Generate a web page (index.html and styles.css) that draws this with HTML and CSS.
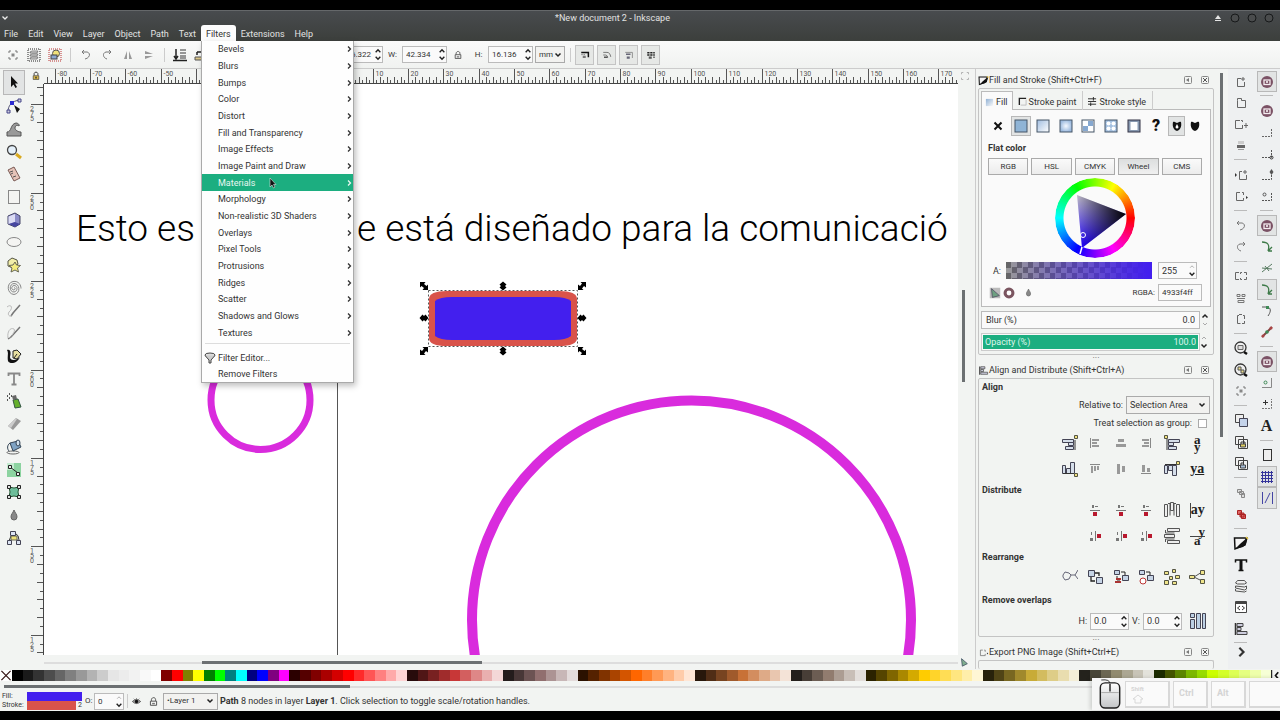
FILE: index.html
```html
<!DOCTYPE html>
<html lang="en">
<head>
    <meta charset="UTF-8">
    <meta name="viewport" content="width=device-width, initial-scale=1.0">
    <title>*New document 2 - Inkscape</title>
    <link rel="stylesheet" href="styles.css">
</head>
<body>
    <!-- Shared icons -->
    <svg class="sprite" aria-hidden="true">
        <symbol id="i-chev" viewBox="0 0 6 6"><path d="M2 .5l2.500 2.500L2 5.500" fill="none" stroke="currentColor" stroke-width="1.3"/></symbol>
        <symbol id="i-updown" viewBox="0 0 8 16"><path d="M1.500 5.500L4 3l2.500 2.500M1.500 10.500L4 13l2.500-2.500" fill="none" stroke="#222" stroke-width="1.5"/></symbol>
        <symbol id="i-up" viewBox="0 0 8 16"><path d="M1.500 5.500L4 3l2.500 2.500" fill="none" stroke="#222" stroke-width="1.5"/><path d="M2 11l2 2 2-2" fill="none" stroke="#aaa"/></symbol>
        <symbol id="i-down" viewBox="0 0 8 16"><path d="M2 5l2-2 2 2" fill="none" stroke="#aaa"/><path d="M1.500 10.500L4 13l2.500-2.500" fill="none" stroke="#222" stroke-width="1.5"/></symbol>
        <symbol id="i-frame" viewBox="0 0 16 16"><path d="M4 6V4h2M10 4h2v2M12 10v2h-2M6 12H4v-2" fill="none" stroke="#777"/><rect x="6.500" y="6.500" width="3" height="3" fill="#888"/></symbol>
        <symbol id="i-undo" viewBox="0 0 16 16"><path d="M4 5h5c4 1 3 6-2 7M4 5l2-2M4 5l2 2" fill="none" stroke="#777"/></symbol>
        <symbol id="i-redo" viewBox="0 0 16 16"><path d="M12 5H7c-4 1-3 6 1 7M12 5l-2-2M12 5l-2 2" fill="none" stroke="#777"/></symbol>
        <symbol id="i-lock" viewBox="0 0 16 16"><path d="M3.500 7.500h9v6h-9zM5 7V5c1-4 6-3 6 0v2" fill="none" stroke="#444" stroke-width="1.300"/><path d="M6 10h4v2H6z" fill="#777"/></symbol>
        <symbol id="i-min" viewBox="0 0 10 10"><rect x="1.500" y="1.500" width="7" height="7" rx="1" fill="none" stroke="#888"/><path d="M6 3v4L3 5z" fill="#777"/></symbol>
        <symbol id="i-close" viewBox="0 0 10 10"><rect x="1.500" y="1.500" width="7" height="7" rx="1" fill="none" stroke="#888"/><path d="M3 3l4 4M7 3L3 7" stroke="#555"/></symbol>
        <symbol id="i-brush" viewBox="0 0 16 16"><path d="M1.500 3h12L12 10 2 14z" fill="#f4f4f4" stroke="#111" stroke-width="1.500"/><path d="M15 2L7 9l-5 5 8-2 3-3z" fill="#111"/><path d="M13 2l2 2" stroke="#e8c840" stroke-width="1.500"/></symbol>
        <symbol id="i-alignl" viewBox="0 0 16 16"><path d="M2.500 2v12" stroke="#333" stroke-width="1.500"/><path d="M4 2.500h6v3H4zM4 6.500h4v3H4zM4 10.500h10v3H4z" fill="#ccd" stroke="#444"/></symbol>
        <symbol id="i-export" viewBox="0 0 16 16"><path d="M7 4.500H3.500v8h7V10M10.500 7V4.500H9" fill="none" stroke="#666"/><path d="M13 8l2 1.500-2 1.500z" fill="#333"/></symbol>
        <symbol id="i-doc" viewBox="0 0 16 16"><path d="M8 4.500H4.500v8h7V8M10 3v4M8 5h4" fill="none" stroke="#666"/></symbol>
        <symbol id="i-snap" viewBox="0 0 16 16"><circle cx="8" cy="8" r="6" fill="#7b5265"/><rect x="5" y="6" width="6" height="4.500" fill="none" stroke="#f4ecef" stroke-width="1.300"/><circle cx="8" cy="8" r="1" fill="#fff"/></symbol>
        <symbol id="i-snapc" viewBox="0 0 16 16"><path d="M3 12.500h9.500V4" fill="none" stroke="#666" stroke-dasharray="2 1"/></symbol>
        <symbol id="i-curve" viewBox="0 0 16 16"><path d="M3 3c6 0 8 3 6 9M9 12h4M9 12l4-4" fill="none" stroke="#3d7a48" stroke-width="1.300"/></symbol>
        <symbol id="i-drop" viewBox="0 0 16 16"><path d="M8 3c1 3 3 4 3 7a3 3 0 0 1-6 0c0-3 2-4 3-7z" fill="#888" stroke="#666"/></symbol>
        <symbol id="i-dup" viewBox="0 0 16 16"><path d="M2.500 2.500h8v8h-8z" fill="#eee" stroke="#444"/><path d="M6.500 6.500h8v8h-8z" fill="#c4d3ea" stroke="#445"/></symbol>
        <symbol id="i-zoom" viewBox="0 0 16 16"><circle cx="7.500" cy="7.500" r="5.500" fill="#eee" stroke="#333" stroke-width="1.300"/><path d="M5 5.500h5v4H5z" fill="#ddd" stroke="#666"/><path d="M11 12l3 2" stroke="#111" stroke-width="2.500"/></symbol>
        <symbol id="i-swap" viewBox="0 0 16 16"><path d="M1.500 1.500h6v6h-6zM9.500 8.500h6v6h-6z" fill="#c6d4e6" stroke="#445"/><path d="M8 4h4v3M4 8v4h4" fill="none" stroke="#222" stroke-width="1.300"/></symbol>
        <symbol id="i-disth" viewBox="0 0 16 16"><path d="M3 8.500h10M8 4.500h3" stroke="#777"/><path d="M5 3h2v3H5z" fill="#777"/><path d="M6 10h4v4H6z" fill="#b8182e"/></symbol>
        <symbol id="i-distv" viewBox="0 0 16 16"><path d="M8.500 3v10M4.500 4v3" stroke="#777"/><path d="M3 10h3v3H3z" fill="#777"/><path d="M10 6h4v4h-4z" fill="#b8182e"/></symbol>
        <symbol id="h-diag" viewBox="-5 -5 10 10"><path d="M-4-4H1.500L0-2 2.500 0 4-1.500V4H-1.500L0 2-2.500 0-4 1.500z"/></symbol>
        <symbol id="h-side" viewBox="-5 -5 10 10"><path d="M-4.500 0L-1.500-3.500 0-2l1.500-1.500L4.500 0 1.500 3.500 0 2l-1.500 1.500z"/></symbol>
    </svg>

    <!-- Title and menu bar -->
    <header class="header">
        <div class="titlebar">
            <svg class="win-menu" viewBox="0 0 6 6"><path d="M.5 1.500L3 4l2.500-2.500" fill="none" stroke="#eee" stroke-width="1.300"/></svg>
            <h1>*New document 2 - Inkscape</h1>
            <div class="win-buttons">
                <svg viewBox="0 0 10 10"><path d="M5 2l3 4H2zM2 7h6v1H2z" fill="#e4e4e4"/></svg>
                <svg viewBox="0 0 10 10"><circle cx="5" cy="5" r="4" fill="#4a4c4d" stroke="#17191a"/></svg>
                <svg viewBox="0 0 10 10"><circle cx="5" cy="5" r="4" fill="#4a4c4d" stroke="#17191a"/></svg>
                <svg viewBox="0 0 10 10"><circle cx="5" cy="5" r="4" fill="#4a4c4d" stroke="#17191a"/></svg>
            </div>
        </div>
        <nav class="menubar">
            <button>File</button>
            <button>Edit</button>
            <button>View</button>
            <button>Layer</button>
            <button>Object</button>
            <button>Path</button>
            <button>Text</button>
            <div class="menu-holder">
                <button class="open">Filters</button>
                <div class="menu">
                    <ul class="menu-list">
                        <li><button>Bevels<svg><use href="#i-chev"/></svg></button></li>
                        <li><button>Blurs<svg><use href="#i-chev"/></svg></button></li>
                        <li><button>Bumps<svg><use href="#i-chev"/></svg></button></li>
                        <li><button>Color<svg><use href="#i-chev"/></svg></button></li>
                        <li><button>Distort<svg><use href="#i-chev"/></svg></button></li>
                        <li><button>Fill and Transparency<svg><use href="#i-chev"/></svg></button></li>
                        <li><button>Image Effects<svg><use href="#i-chev"/></svg></button></li>
                        <li><button>Image Paint and Draw<svg><use href="#i-chev"/></svg></button></li>
                        <li><button class="current">Materials<svg><use href="#i-chev"/></svg></button></li>
                        <li><button>Morphology<svg><use href="#i-chev"/></svg></button></li>
                        <li><button>Non-realistic 3D Shaders<svg><use href="#i-chev"/></svg></button></li>
                        <li><button>Overlays<svg><use href="#i-chev"/></svg></button></li>
                        <li><button>Pixel Tools<svg><use href="#i-chev"/></svg></button></li>
                        <li><button>Protrusions<svg><use href="#i-chev"/></svg></button></li>
                        <li><button>Ridges<svg><use href="#i-chev"/></svg></button></li>
                        <li><button>Scatter<svg><use href="#i-chev"/></svg></button></li>
                        <li><button>Shadows and Glows<svg><use href="#i-chev"/></svg></button></li>
                        <li><button>Textures<svg><use href="#i-chev"/></svg></button></li>
                    </ul>
                    <ul class="menu-tail">
                        <li><button><svg class="funnel" viewBox="0 0 12 12"><ellipse cx="6" cy="3" rx="5" ry="2" fill="#ddd" stroke="#444"/><path d="M1 3.500L5 8v3h2V8l4-4.500" fill="#ccc" stroke="#444"/></svg>Filter Editor...</button></li>
                        <li><button>Remove Filters</button></li>
                    </ul>
                    <svg class="pointer" viewBox="0 0 8 12"><path d="M1 1v9l2-2 1.500 3 1.500-1-1.500-2.500H7z" fill="#111" stroke="#ddd" stroke-width=".6"/></svg>
                </div>
            </div>
            <button>Extensions</button>
            <button>Help</button>
        </nav>
    </header>

    <!-- Tool controls -->
    <div class="controls">
        <div class="control-icons">
            <button aria-label="Select all"><svg><use href="#i-frame"/></svg></button>
            <button aria-label="Select in all layers"><svg viewBox="0 0 16 16"><rect x="2" y="2" width="12" height="12" fill="none" stroke="#222" stroke-dasharray="1 1"/><path d="M4 5l2-1h6l-1 2H4zM4 8l2-1h6l-1 2H4zM4 11l2-1h6l-1 2H4z" fill="#ddd" stroke="#555" stroke-width=".7"/></svg></button>
            <button aria-label="Deselect"><svg viewBox="0 0 16 16"><rect x="2" y="2" width="12" height="12" fill="none" stroke="#b33" stroke-dasharray="1 1"/><circle cx="9" cy="6.500" r="3.500" fill="#efe27a" stroke="#555"/><rect x="4" y="8" width="6" height="4" fill="#8aa8d0" stroke="#444"/></svg></button>
            <span class="vsep"></span>
            <button aria-label="Rotate left"><svg><use href="#i-undo"/></svg></button>
            <button aria-label="Rotate right"><svg><use href="#i-redo"/></svg></button>
            <button aria-label="Flip horizontal"><svg viewBox="0 0 16 16"><path d="M7 4v8H4zM9 4v8h3z" fill="#999"/></svg></button>
            <button aria-label="Flip vertical"><svg viewBox="0 0 16 16"><path d="M4 4v3h8zM4 12V9h8z" fill="#999"/></svg></button>
            <span class="vsep"></span>
            <button aria-label="Lower to bottom"><svg viewBox="0 0 16 16"><path d="M4 2v9M2 9l2 3 2-3M1 13.500h14" fill="none" stroke="#222" stroke-width="1.500"/><path d="M8 3h6M8 6h6M8 9h6M8 11h6" stroke="#777" stroke-width="1.500"/></svg></button>
            <button aria-label="Lower"><svg viewBox="0 0 16 16"><path d="M4 5h8M4 5v3" stroke="#222" fill="none" stroke-width="1.500"/><path d="M2 10h12v3H2z" fill="#dcc88a" stroke="#555"/></svg></button>
        </div>
        <div class="control-fields">
            <div class="spin"><input id="pos-y" aria-label="Y" value="116.322"><svg><use href="#i-updown"/></svg></div>
            <label for="size-w">W:</label>
            <div class="spin"><input id="size-w" value="42.334"><svg><use href="#i-updown"/></svg></div>
            <button class="lock" aria-label="Lock ratio"><svg><use href="#i-lock"/></svg></button>
            <label for="size-h">H:</label>
            <div class="spin"><input id="size-h" value="16.136"><svg><use href="#i-updown"/></svg></div>
            <select class="unit" aria-label="Unit"><option>mm</option></select>
            <span class="vsep"></span>
            <div class="toggles">
                <button aria-label="Scale stroke"><svg viewBox="0 0 16 16"><path d="M3 4.500h9.500V11" fill="none" stroke="#111" stroke-width="2"/><path d="M3 7.500h6" stroke="#666" stroke-dasharray="2 1"/><path d="M5 9h4v3H5z" fill="#777"/></svg></button>
                <button aria-label="Scale corners"><svg viewBox="0 0 16 16"><path d="M3 4.500h5q4 0 5 6M3 8h3q2 0 3 3" fill="none" stroke="#555"/><path d="M4 10h5v2H4z" fill="#555"/></svg></button>
                <button aria-label="Move gradients"><svg viewBox="0 0 16 16"><path d="M3 4.500h9.500V12" fill="none" stroke="#777"/><path d="M4 6h6v2H4zM5 10h4v3H5z" fill="#667"/></svg></button>
                <button aria-label="Move patterns"><svg viewBox="0 0 16 16"><path d="M3 5h10M3 8h10" stroke="#222" stroke-width="2" stroke-dasharray="3 1"/><path d="M5 10h4v3H5zM11 10h2v2h-2z" fill="#555"/></svg></button>
            </div>
        </div>
    </div>

    <main class="main">
        <!-- Toolbox -->
        <div class="toolbox">
            <div class="tools">
                <button class="active" aria-label="Select"><svg viewBox="0 0 16 16"><path d="M5 2v11l2.500-2.500L9.500 14l1.500-1-2-3.500H12z" fill="#111"/></svg></button>
                <button aria-label="Nodes"><svg viewBox="0 0 16 16"><path d="M2 14C2 8 5 3 14 2" fill="none" stroke="#557"/><path d="M4 3h4v4H4z" fill="#2b2bd0"/><path d="M1 12h3v3H1zM12 1h3v3h-3z" fill="#ccd" stroke="#448"/><path d="M8 7l6 4-3 4z" fill="#111"/></svg></button>
                <button aria-label="Tweak"><svg viewBox="0 0 16 16"><path d="M1 15v-4c5 0 3-8 9-9 2 0 4 2 3 3-1-1-4-1-4 2 0 2 3 4 6 4v4z" fill="#999" stroke="#555"/></svg></button>
                <button aria-label="Zoom"><svg viewBox="0 0 16 16"><circle cx="6" cy="6" r="4.500" fill="#e4f0fa" stroke="#444" stroke-width="1.300"/><path d="M10 10l5 4" stroke="#d9aa20" stroke-width="3"/></svg></button>
                <button aria-label="Measure"><svg viewBox="0 0 16 16"><path d="M2 4l6-3 6 11-6 3z" fill="#e5c3b8" stroke="#7a5a55"/><path d="M4 6l3-1M5 8l2-1M7 11l3-1" stroke="#555"/></svg></button>
                <button aria-label="Rectangle"><svg viewBox="0 0 16 16"><rect x="2.500" y="1.500" width="11" height="13" fill="#f4f4f2" stroke="#888"/></svg></button>
                <button aria-label="3D box"><svg viewBox="0 0 16 16"><path d="M2 4l7-3 5 3v8l-5 3-7-3z" fill="#8c8cc8" stroke="#446"/><path d="M2.500 4.500L9 2v8l-6.500 2z" fill="#dcdcf4"/><path d="M9 10l5 2-5 3-6-3z" fill="#4646a0"/></svg></button>
                <button aria-label="Ellipse"><svg viewBox="0 0 16 16"><ellipse cx="8" cy="8" rx="7" ry="4.500" fill="#f4f4f2" stroke="#888"/></svg></button>
                <button aria-label="Star"><svg viewBox="0 0 16 16"><path d="M2 4l4-3 5 2 1 4-5 4-5-2z" fill="#f2eeaa" stroke="#554"/><path d="M9 5l1.500 3 4 .5-3 2.500 1 4-3.500-2-4 2 1-4-3-2.500 4-.5z" fill="#f4ec80" stroke="#665"/></svg></button>
                <button aria-label="Spiral"><svg viewBox="0 0 16 16"><path d="M8 8c1-1 2 1 0 2-3 0-3-4 0-4.500 4 0 4 6 0 6.500C3 12 3 4 8 3.500c6 0 7 10 0 11C1 14 0 3 7 1.500c6-1 8 4 8 7" fill="none" stroke="#888"/></svg></button>
                <button aria-label="Pencil"><svg viewBox="0 0 16 16"><path d="M14 2L7 10l-2 3" stroke="#777" stroke-width="1.500"/><path d="M1 4c5-4 6 2 2 5-2 3 1 5 3 4" fill="none" stroke="#bbb"/></svg></button>
                <button aria-label="Pen"><svg viewBox="0 0 16 16"><path d="M14 2L5 12l-3 2" stroke="#777" stroke-width="1.500"/><path d="M2 13C1 7 4 2 8 4c2 2-3 8-5 9" fill="none" stroke="#bbb"/></svg></button>
                <button aria-label="Calligraphy"><svg viewBox="0 0 16 16"><path d="M1 2c4-1 4 3 3 7 0 4 6 4 10 0-2 6-10 8-12 4C1 8 3 5 1 2z" fill="#111"/><path d="M7 3l4-1 4 4-4 5-4-1z" fill="#e7dfa0" stroke="#222"/><path d="M8 10l3-4" stroke="#222"/></svg></button>
                <button aria-label="Text"><svg viewBox="0 0 16 16"><path d="M2.500 5V2.500h11V5M8 2.500v11M5.500 13.500h5" fill="none" stroke="#888" stroke-width="1.800"/></svg></button>
                <button aria-label="Spray"><svg viewBox="0 0 16 16"><path d="M7 7l5-1 3 8-6 1z" fill="#65b02c" stroke="#354"/><path d="M6 3l4-1 1 4-4 1z" fill="#666"/><path d="M1 3h1M3 1h1M3 5h1M1 7h1M5 3h1" stroke="#222" stroke-width="1.500"/></svg></button>
                <button aria-label="Eraser"><svg viewBox="0 0 16 16"><path d="M2 10l8-8 5 3-8 9z" fill="#999"/><path d="M2 10l8-8 1 1-6 9z" fill="#ccc"/></svg></button>
                <button aria-label="Bucket"><svg viewBox="0 0 16 16"><ellipse cx="7" cy="13.500" rx="6" ry="1.500" fill="none" stroke="#666"/><path d="M4 4l8-2 3 6-8 4z" fill="#7fa3c4" stroke="#345"/><path d="M4 4C1 6 1 10 3 12" fill="none" stroke="#345"/><ellipse cx="12" cy="4" rx="2" ry="3" fill="#cfe0ee" stroke="#345"/></svg></button>
                <button aria-label="Gradient"><svg viewBox="0 0 16 16"><path d="M1 1h14v14H1z" fill="#8cd3a0"/><path d="M1 1h7v7H1z" fill="#c4ecd0"/><path d="M4 5l8 6" stroke="#222"/><path d="M2.500 3.500h3v3h-3zM10.500 10.500h3v3h-3z" fill="#eee" stroke="#222"/></svg></button>
                <button aria-label="Mesh"><svg viewBox="0 0 16 16"><path d="M3 3q5 2 10 0-2 5 0 10-5-2-10 0 2-5 0-10z" fill="#6dbd9a" stroke="#253"/><path d="M1.500 1.500h3v3h-3zM11.500 1.500h3v3h-3zM1.500 11.500h3v3h-3zM11.500 11.500h3v3h-3z" fill="#ddd" stroke="#222"/></svg></button>
                <button aria-label="Dropper"><svg><use href="#i-drop"/></svg></button>
                <button aria-label="Connector"><svg viewBox="0 0 16 16"><path d="M5 6l-2 5M8 6l4 5M9 3q4 2 4 7" fill="none" stroke="#333"/><path d="M5 6h6v4H5z" fill="#efe27a" stroke="#665"/><path d="M4.500 1.500h5v4h-5zM1.500 10.500h4v4h-4zM10.500 10.500h4v4h-4z" fill="#dde4f4" stroke="#445"/></svg></button>
            </div>
        </div>

        <!-- Rulers and drawing -->
        <section class="editor">
            <svg class="guide-lock" viewBox="0 0 16 16"><path d="M5 7V4c1-3 5-3 6 0v3" fill="none" stroke="#333" stroke-width="1.500"/><path d="M3.500 7.500h9v6h-9z" fill="#d9b84a" stroke="#333"/><path d="M7 9h2v3H7z" fill="#222"/></svg>
            <svg class="ruler-h" id="rulerH"></svg>
            <svg class="corner" viewBox="0 0 16 16"><path d="M4 6V4h2M10 4h2v2M12 10v2h-2M6 12H4v-2" fill="none" stroke="#aaa"/></svg>
            <svg class="ruler-v" id="rulerV"></svg>
            <svg class="canvas">
                <path d="M293.500 0V800" stroke="#555"/>
                <text class="headline" x="32" y="157">Esto es</text>
                <text class="headline" x="313" y="157">e está diseñado para la comunicació</text>
                <circle cx="216.500" cy="316" r="49.500" fill="none" stroke="#d92bdd" stroke-width="7"/>
                <circle cx="647.500" cy="536" r="219.500" fill="none" stroke="#d92bdd" stroke-width="10"/>
                <path d="M385 215Q385 207 403 207H515Q533 207 533 215V254Q533 262 515 262H403Q385 262 385 254z" fill="#d9534a"/>
                <path d="M391 217Q396 213 408 213H510Q522 213 527 217V252Q522 256 510 256H408Q396 256 391 252z" fill="#431fee"/>
                <rect x="384.500" y="206.500" width="149" height="56" fill="none" stroke="#555" stroke-dasharray="2 2"/>
                <use href="#h-diag" x="375" y="197" width="10" height="10"/>
                <use href="#h-diag" x="533" y="262" width="10" height="10"/>
                <g transform="translate(538 202) rotate(90)"><use href="#h-diag" x="-5" y="-5" width="10" height="10"/></g>
                <g transform="translate(380 267) rotate(90)"><use href="#h-diag" x="-5" y="-5" width="10" height="10"/></g>
                <use href="#h-side" x="375" y="229" width="10" height="10"/>
                <use href="#h-side" x="533" y="229" width="10" height="10"/>
                <g transform="translate(459 202) rotate(90)"><use href="#h-side" x="-5" y="-5" width="10" height="10"/></g>
                <g transform="translate(459 267) rotate(90)"><use href="#h-side" x="-5" y="-5" width="10" height="10"/></g>
            </svg>
            <div class="scroll-v"><span></span></div>
            <span></span>
            <div class="scroll-h"><span></span></div>
            <svg class="cms" viewBox="0 0 12 12"><path d="M3 2l7 6-6 3z" fill="#7fae8e" stroke="#456"/></svg>
        </section>

        <!-- Docked dialogs -->
        <aside class="dock">
            <div class="dock-title">
                <svg><use href="#i-brush"/></svg>
                <h2>Fill and Stroke (Shift+Ctrl+F)</h2>
                <button aria-label="Iconify"><svg><use href="#i-min"/></svg></button>
                <button aria-label="Close"><svg><use href="#i-close"/></svg></button>
            </div>
            <div class="panel fill-panel">
                <div class="tabs">
                    <button class="selected"><svg viewBox="0 0 10 10"><defs><linearGradient id="tg" x2="1" y2="1"><stop stop-color="#8fb0d4"/><stop offset="1" stop-color="#fafafa"/></linearGradient></defs><path d="M1 1h8v8H1z" fill="url(#tg)"/></svg>Fill</button>
                    <button><svg viewBox="0 0 10 10"><path d="M1.500 9V1.500H9" fill="none" stroke="#222" stroke-width="1.500"/><path d="M9 3v6H3" fill="none" stroke="#bbb"/></svg>Stroke paint</button>
                    <button><svg viewBox="0 0 10 10"><path d="M0 2h9M0 5h9M0 8h9" stroke="#222"/><path d="M6 0v4M3 6v4" stroke="#222"/></svg>Stroke style</button>
                </div>
                <div class="tab-page">
                    <div class="paint-types">
                        <button aria-label="No paint"><svg viewBox="0 0 16 16"><path d="M4.500 4.500l7 7M11.500 4.500l-7 7" stroke="#111" stroke-width="2"/></svg></button>
                        <button class="pressed" aria-label="Flat color"><svg viewBox="0 0 16 16"><rect x="2" y="2" width="12" height="12" fill="#8fb4d6" stroke="#456"/></svg></button>
                        <button aria-label="Linear gradient"><svg viewBox="0 0 16 16"><defs><linearGradient id="lg" x2="1" y2="1"><stop stop-color="#a0bde0"/><stop offset="1" stop-color="#fff"/></linearGradient></defs><rect x="2" y="2" width="12" height="12" fill="url(#lg)" stroke="#456"/></svg></button>
                        <button aria-label="Radial gradient"><svg viewBox="0 0 16 16"><defs><radialGradient id="rg"><stop stop-color="#f4f8ff"/><stop offset="1" stop-color="#9dbbe0"/></radialGradient></defs><rect x="2" y="2" width="12" height="12" fill="url(#rg)" stroke="#456"/></svg></button>
                        <button aria-label="Mesh gradient"><svg viewBox="0 0 16 16"><rect x="2" y="2" width="12" height="12" fill="#fff" stroke="#456"/><path d="M3 8h5v5H3zM8 3h5v5H8z" fill="#86a8d0"/></svg></button>
                        <button aria-label="Pattern"><svg viewBox="0 0 16 16"><rect x="2" y="2" width="12" height="12" fill="#a4c0e0" stroke="#456"/><circle cx="5.500" cy="5.500" r="2" fill="#fff"/><circle cx="10.500" cy="5.500" r="2" fill="#fff"/><circle cx="5.500" cy="10.500" r="2" fill="#fff"/><circle cx="10.500" cy="10.500" r="2" fill="#fff"/></svg></button>
                        <button aria-label="Swatch"><svg viewBox="0 0 16 16"><rect x="2" y="2" width="12" height="12" fill="#8899b0" stroke="#334"/><rect x="4.500" y="4" width="7" height="8" fill="#fff"/></svg></button>
                        <button class="unknown" aria-label="Unset paint">?</button>
                        <button class="pressed narrow" aria-label="Even-odd"><svg viewBox="0 0 16 16"><path d="M4 4c2-1 3 1 4 1s2-2 4-1c1 5-1 8-4 9-3-1-5-4-4-9z" fill="#111"/><path d="M8 6l1.500 3a1.500 1.500 0 0 1-3 0z" fill="#fff"/></svg></button>
                        <button class="narrow" aria-label="Nonzero"><svg viewBox="0 0 16 16"><path d="M4 4c2-1 3 1 4 1s2-2 4-1c1 5-1 8-4 9-3-1-5-4-4-9z" fill="#111"/></svg></button>
                    </div>
                    <h3>Flat color</h3>
                    <div class="modes">
                        <button>RGB</button>
                        <button>HSL</button>
                        <button>CMYK</button>
                        <button class="pressed">Wheel</button>
                        <button>CMS</button>
                    </div>
                    <div class="wheel">
                        <svg viewBox="0 0 80 80">
                            <defs>
                                <linearGradient id="t1" x1="20" y1="18" x2="24" y2="66" gradientUnits="userSpaceOnUse"><stop stop-color="#d8d4e4"/><stop offset="1" stop-color="#2608ff"/></linearGradient>
                                <linearGradient id="t2" x1="20" y1="45" x2="71" y2="36" gradientUnits="userSpaceOnUse"><stop stop-color="#000" stop-opacity="0"/><stop offset="1" stop-color="#000"/></linearGradient>
                            </defs>
                            <path d="M22 17L71 36 27 70z" fill="url(#t1)"/>
                            <path d="M22 17L71 36 27 70z" fill="url(#t2)"/>
                            <path d="M27 69l-2 7" stroke="#fff" stroke-width="1.500"/>
                            <circle cx="28" cy="57" r="2.500" fill="none" stroke="#fff"/>
                        </svg>
                    </div>
                    <div class="alpha-row">
                        <label for="alpha">A:</label>
                        <input type="range" class="alpha" id="alpha" max="255" value="255">
                        <div class="spin"><input aria-label="Alpha value" value="255"><svg><use href="#i-down"/></svg></div>
                    </div>
                    <div class="rgba-row">
                        <svg viewBox="0 0 16 16"><path d="M2 2h12v12H2z" fill="#bbb"/><path d="M4 3l9 8-8 2z" fill="#6ca080" stroke="#556"/></svg>
                        <svg viewBox="0 0 16 16"><circle cx="8" cy="8" r="4.500" fill="#fff" stroke="#7b5560" stroke-width="3.500"/></svg>
                        <svg class="pick"><use href="#i-drop"/></svg>
                        <label for="rgba">RGBA:</label>
                        <input id="rgba" value="4933f4ff">
                    </div>
                </div>
                <div class="bar"><label for="blur">Blur (%)</label><input id="blur" value="0.0"><svg><use href="#i-up"/></svg></div>
                <div class="bar full"><label for="opacity">Opacity (%)</label><input id="opacity" value="100.0"><svg><use href="#i-down"/></svg></div>
            </div>
            <div class="grip">···</div>

            <div class="dock-title">
                <svg><use href="#i-alignl"/></svg>
                <h2>Align and Distribute (Shift+Ctrl+A)</h2>
                <button aria-label="Iconify"><svg><use href="#i-min"/></svg></button>
                <button aria-label="Close"><svg><use href="#i-close"/></svg></button>
            </div>
            <div class="panel align-panel">
                <h3>Align</h3>
                <div class="line"><label for="relative">Relative to:</label><select id="relative"><option>Selection Area</option></select></div>
                <div class="line"><label for="group">Treat selection as group:</label><input type="checkbox" id="group"></div>
                <div class="icon-grid">
                    <button aria-label="Right to left anchor"><svg viewBox="0 0 16 16"><path d="M.500 4.500h11v3H.5zM6.500 7.500h5v3h-5zM3.500 11.500h8v3h-8z" fill="#d5deea" stroke="#445"/><path d="M13 5v10" stroke="#333"/><path d="M12.500.500h3v3h-3z" fill="#f0e080" stroke="#554"/></svg></button>
                    <button aria-label="Align left"><svg viewBox="0 0 16 16"><path d="M3.500 3v10" stroke="#888"/><path d="M5 4h7v2H5zM5 7h5v2H5zM5 10h7v2H5z" fill="#999"/></svg></button>
                    <button aria-label="Center on vertical axis"><svg viewBox="0 0 16 16"><path d="M5 4h6v3H5zM3 9h10v3H3z" fill="#999"/></svg></button>
                    <button aria-label="Align right"><svg viewBox="0 0 16 16"><path d="M12.500 3v10" stroke="#888"/><path d="M4 4h7v2H4zM6 7h5v2H6zM4 10h7v2H4z" fill="#999"/></svg></button>
                    <button aria-label="Left to right anchor"><svg viewBox="0 0 16 16"><path d="M4.500 4.500h11v3h-11zM4.500 7.500h5v3h-5zM4.500 11.500h8v3h-8z" fill="#d5deea" stroke="#445"/><path d="M3 4v11" stroke="#333"/><path d="M.500.500h3v3h-3z" fill="#f0e080" stroke="#554"/></svg></button>
                    <button class="glyph stack" aria-label="Baseline horizontal"><span>a</span><span>y</span></button>
                    <button aria-label="Bottom to top anchor"><svg viewBox="0 0 16 16"><path d="M.500 4.500h3v8h-3zM4.500 7.500h4v5h-4zM8.500 1.500h4v11h-4z" fill="#d5deea" stroke="#445"/><path d="M1 12.500h11" stroke="#333"/><path d="M12.500 12.500h3v3h-3z" fill="#f0e080" stroke="#554"/></svg></button>
                    <button aria-label="Align top"><svg viewBox="0 0 16 16"><path d="M3 3.500h10" stroke="#888"/><path d="M4 5h2v7H4zM7 5h2v5H7zM10 5h2v4h-2z" fill="#999"/></svg></button>
                    <button aria-label="Center on horizontal axis"><svg viewBox="0 0 16 16"><path d="M4 3h3v10H4zM9 5h3v6H9z" fill="#999"/></svg></button>
                    <button aria-label="Align bottom"><svg viewBox="0 0 16 16"><path d="M3 12.500h10" stroke="#888"/><path d="M4 4h3v7H4zM9 7h3v4H9z" fill="#999"/></svg></button>
                    <button aria-label="Top to bottom anchor"><svg viewBox="0 0 16 16"><path d="M.500 4.500h3v8h-3zM4.500 4.500h4v5h-4zM8.500 4.500h4v10h-4z" fill="#d5deea" stroke="#445"/><path d="M1 3.500h12" stroke="#333"/><path d="M12.500.500h3v3h-3z" fill="#f0e080" stroke="#554"/></svg></button>
                    <button class="glyph under" aria-label="Baseline vertical">ya</button>
                </div>
                <h3>Distribute</h3>
                <div class="icon-grid dist">
                    <button aria-label="Distribute left edges"><svg><use href="#i-disth"/></svg></button>
                    <button aria-label="Distribute centers"><svg><use href="#i-disth"/></svg></button>
                    <button aria-label="Distribute right edges"><svg><use href="#i-disth"/></svg></button>
                    <button aria-label="Equal horizontal gaps"><svg viewBox="0 0 16 16"><path d="M.500 2.500h3v12h-3zM6.500.500h3v8h-3zM12.500 2.500h3v12h-3z" fill="#eee" stroke="#555"/><path d="M4 1.500h2v12M12 1.500h-2v12" fill="none" stroke="#555"/></svg></button>
                    <button class="glyph sides" aria-label="Distribute baselines">ay</button>
                    <button aria-label="Distribute top edges"><svg><use href="#i-distv"/></svg></button>
                    <button aria-label="Distribute middles"><svg><use href="#i-distv"/></svg></button>
                    <button aria-label="Distribute bottom edges"><svg><use href="#i-distv"/></svg></button>
                    <button aria-label="Equal vertical gaps"><svg viewBox="0 0 16 16"><path d="M3.500.500h12v3h-12zM.500 6.500h10v3H.5zM3.500 12.500h12v3h-12z" fill="#eee" stroke="#555"/><path d="M1.500 2v3h9M1.500 14v-3h9" fill="none" stroke="#555"/></svg></button>
                    <button class="glyph stack lined" aria-label="Distribute baselines vertically"><span>y</span><span>a</span></button>
                </div>
                <h3>Rearrange</h3>
                <div class="icon-grid">
                    <button aria-label="Graph layout"><svg viewBox="0 0 16 16"><path d="M1 6l2-3 4 1 2 2-2 4-4 1-2-3zM9 6h4M16 1l-3 5 3 4" fill="none" stroke="#667"/></svg></button>
                    <button aria-label="Exchange positions"><svg><use href="#i-swap"/></svg></button>
                    <button aria-label="Exchange in z-order"><svg viewBox="0 0 16 16"><path d="M1.500 1.500h5v4h-5zM9.500 6.500h6v5h-6z" fill="#c6d4e6" stroke="#445"/><path d="M8 3h4v3M4 7v4h3" stroke="#222" fill="none"/><path d="M3 9h5v2H3zM2 12h6v2H2z" fill="#a33"/></svg></button>
                    <button aria-label="Exchange clockwise"><svg viewBox="0 0 16 16"><path d="M1.500 1.500h5v4h-5zM9.500 6.500h6v5h-6z" fill="#c6d4e6" stroke="#445"/><path d="M8 3h4v3" fill="none" stroke="#222"/><circle cx="5" cy="12" r="3" fill="#fff" stroke="#b33"/></svg></button>
                    <button aria-label="Randomize"><svg viewBox="0 0 16 16"><path d="M.500 2.500h4v3h-4zM8.500.500h3v3h-3zM11.500 6.500h4v3h-4zM5.500 7.500h3v3h-3zM.500 11.500h4v4h-4zM8.500 12.500h4v3h-4z" fill="#efe48a" stroke="#554"/></svg></button>
                    <button aria-label="Unclump"><svg viewBox="0 0 16 16"><path d="M5 8l8-5M5 8l8 4" stroke="#555"/><path d="M.500 6.500h5v3h-5zM11.500 1.500h4v4h-4zM11.500 10.500h4v4h-4z" fill="#efe48a" stroke="#554"/></svg></button>
                </div>
                <h3 class="spaced">Remove overlaps</h3>
                <div class="line overlaps">
                    <label for="gap-h">H:</label>
                    <div class="spin"><input id="gap-h" value="0.0"><svg><use href="#i-updown"/></svg></div>
                    <label for="gap-v">V:</label>
                    <div class="spin"><input id="gap-v" value="0.0"><svg><use href="#i-updown"/></svg></div>
                    <button aria-label="Remove overlaps"><svg viewBox="0 0 16 16"><path d="M.500.500h4v4h-4zM.500 6.500h4v9h-4zM6.500.500h4v15h-4zM12.500.500h3v15h-3z" fill="#bcd0e4" stroke="#445"/></svg></button>
                </div>
            </div>
            <div class="grip">···</div>

            <div class="dock-title">
                <svg><use href="#i-export"/></svg>
                <h2>Export PNG Image (Shift+Ctrl+E)</h2>
                <button aria-label="Iconify"><svg><use href="#i-min"/></svg></button>
                <button aria-label="Close"><svg><use href="#i-close"/></svg></button>
            </div>
            <div class="panel rest"></div>
        </aside>
        <div class="dock-scroll"><span></span></div>

        <!-- Commands bar -->
        <div class="side-bar">
            <button aria-label="New"><svg><use href="#i-doc"/></svg></button>
            <button aria-label="Open"><svg viewBox="0 0 16 16"><path d="M4.500 5.500v7h8v-7h-4v-2h-4v2" fill="none" stroke="#666"/></svg></button>
            <button aria-label="Save"><svg viewBox="0 0 16 16"><path d="M7 4.500H2.500v8h7V9M8 4.500h1.500V6M13 7v5M11 9.500h4" fill="none" stroke="#666"/></svg></button>
            <button aria-label="Print"><svg viewBox="0 0 16 16"><path d="M5 3h6v3H5z" fill="#ccc"/><path d="M4 7h8v3H4z" fill="#666"/><path d="M5 11.500h6" stroke="#999"/></svg></button>
            <hr>
            <button aria-label="Import"><svg viewBox="0 0 16 16"><path d="M2 6l2 2-2 2z" fill="#333"/><path d="M9 4.500H6.500v8h7V8M12 3v4M10 5h4" fill="none" stroke="#666"/></svg></button>
            <button aria-label="Export"><svg><use href="#i-export"/></svg></button>
            <hr>
            <button aria-label="Undo"><svg><use href="#i-undo"/></svg></button>
            <button aria-label="Redo"><svg><use href="#i-redo"/></svg></button>
            <hr>
            <button aria-label="Copy"><svg viewBox="0 0 16 16"><path d="M6 4.500H2.500v7H6M9 4.500H7.500V6M7.500 10v1.500H9M11 4.500h2.500V7M13.500 9v2.500H11" fill="none" stroke="#666"/></svg></button>
            <button aria-label="Cut"><svg viewBox="0 0 16 16"><path d="M4 4.500h3v2H4zM9 4.500h3v2H9zM4 8.500h8M5 10.500h6v2H5z" fill="none" stroke="#777"/></svg></button>
            <button aria-label="Paste"><svg viewBox="0 0 16 16"><path d="M6 4.500H4.500v8h3M10 4.500h1.500V8M9 12.500h2.500V10M6 3.500h3" fill="none" stroke="#666"/></svg></button>
            <hr>
            <button aria-label="Zoom selection"><svg><use href="#i-zoom"/></svg></button>
            <button aria-label="Zoom drawing"><svg viewBox="0 0 16 16"><circle cx="7.500" cy="7.500" r="5.500" fill="#eee" stroke="#333" stroke-width="1.300"/><path d="M5 5h3v3H5zM8 8h3v3H8z" fill="#e5d98a" stroke="#555"/><path d="M11 12l3 2" stroke="#111" stroke-width="2.500"/></svg></button>
            <button aria-label="Zoom page"><svg><use href="#i-frame"/></svg></button>
            <hr>
            <button aria-label="Duplicate"><svg><use href="#i-dup"/></svg></button>
            <button aria-label="Clone"><svg viewBox="0 0 16 16"><path d="M2.500 2.500h8v8h-8zM5.500 5.500h9v9h-9z" fill="#f2f2f2" stroke="#444"/><path d="M8 10V8h4v2" fill="none" stroke="#333"/><path d="M7.500 10h5v3h-5z" fill="#e0cf62" stroke="#444"/></svg></button>
            <button aria-label="Unlink clone"><svg viewBox="0 0 16 16"><path d="M2.500 2.500h8v8h-8zM5.500 5.500h9v9h-9z" fill="#f2f2f2" stroke="#444"/><path d="M8 10V8h3" fill="none" stroke="#333"/><path d="M7.500 10h5v3h-5z" fill="#a9c0dc" stroke="#444"/></svg></button>
            <hr>
            <button aria-label="Group"><svg viewBox="0 0 16 16"><path d="M4.500 4.500h4v3h-4zM6.500 6.500h4v3h-4zM8.500 8.500h3v4h-3z" fill="#ddd" stroke="#888"/></svg></button>
            <button aria-label="Ungroup"><svg viewBox="0 0 16 16"><path d="M4.500 4.500h4v4h-4zM8.500 8.500h4v4h-4zM7 7h4v4H7z" fill="#d66" stroke="#a22"/></svg></button>
            <hr>
            <button aria-label="Fill and Stroke"><svg><use href="#i-brush"/></svg></button>
            <button aria-label="Text dialog"><svg viewBox="0 0 16 16"><path d="M2.500 5.500V3h11v2.500M5.500 13.500h5" fill="none" stroke="#111" stroke-width="1.500"/><path d="M8 3v11" stroke="#111" stroke-width="3"/></svg></button>
            <button aria-label="Layers"><svg viewBox="0 0 16 16"><path d="M2.500 5l2-2.500h7l2 2.500-2 1h-7zM2.500 8l9 1 2-1M2.500 8v2l9 2 2-1v-3M2.500 11v2l9 1 2-1" fill="#eee" stroke="#555"/></svg></button>
            <button aria-label="XML editor"><svg viewBox="0 0 16 16"><path d="M2.500 2.500h11v11h-11z" fill="#fff" stroke="#444"/><path d="M2 4h12" stroke="#444" stroke-width="2"/><path d="M7 7L4.500 9 7 11M9 7l2.500 2L9 11" fill="none" stroke="#333"/></svg></button>
            <button aria-label="Align dialog"><svg><use href="#i-alignl"/></svg></button>
            <hr>
            <button class="more" aria-label="More"><svg><use href="#i-chev"/></svg></button>
        </div>

        <!-- Snap bar -->
        <div class="side-bar snap-bar">
            <button class="pressed" aria-label="Snap"><svg><use href="#i-snap"/></svg></button>
            <hr>
            <button aria-label="Snap boxes"><svg><use href="#i-snap"/></svg></button>
            <button aria-label="Snap edges"><svg><use href="#i-snapc"/></svg></button>
            <button aria-label="Snap corners"><svg viewBox="0 0 16 16"><path d="M3 11.500h9.500V3" fill="none" stroke="#555" stroke-dasharray="2 1"/><circle cx="12.500" cy="11.500" r="1.500" fill="none" stroke="#333"/></svg></button>
            <button aria-label="Snap edge midpoints"><svg viewBox="0 0 16 16"><path d="M3 12.500h9.500V4" fill="none" stroke="#555" stroke-dasharray="2 1"/><path d="M12.500 2l2 3-2 3-2-3z" fill="#555"/></svg></button>
            <button aria-label="Snap centers"><svg viewBox="0 0 16 16"><path d="M3 12.500h9.500V4" fill="none" stroke="#555" stroke-dasharray="2 1"/><circle cx="5.500" cy="6.500" r="1.500" fill="none" stroke="#555"/></svg></button>
            <hr>
            <button class="pressed" aria-label="Snap nodes"><svg><use href="#i-snap"/></svg></button>
            <button aria-label="Snap paths"><svg><use href="#i-curve"/></svg></button>
            <button aria-label="Snap intersections"><svg viewBox="0 0 16 16"><path d="M3 12L13 4M3 8l10 1M6 6l4 5" fill="none" stroke="#567a60"/></svg></button>
            <button class="pressed" aria-label="Snap cusp nodes"><svg><use href="#i-curve"/></svg></button>
            <button aria-label="Snap smooth nodes"><svg viewBox="0 0 16 16"><path d="M3 4h6c4 2 2 6 0 9" fill="none" stroke="#555"/><path d="M7 3h3v3H7z" fill="#3d8a55"/></svg></button>
            <button aria-label="Snap line midpoints"><svg viewBox="0 0 16 16"><path d="M3 13L13 3" stroke="#844" stroke-width="2"/><circle cx="4" cy="12" r="1.500" fill="#a44"/><circle cx="8" cy="8" r="1.800" fill="#3d8a55"/><circle cx="12" cy="4" r="1.500" fill="#a44"/></svg></button>
            <hr>
            <button class="pressed" aria-label="Snap others"><svg><use href="#i-snap"/></svg></button>
            <button aria-label="Snap object centers"><svg viewBox="0 0 16 16"><path d="M3 12.500h9.500V3" fill="none" stroke="#888"/><circle cx="6.500" cy="7.500" r="1.500" fill="none" stroke="#3d8a55"/></svg></button>
            <button aria-label="Snap rotation centers"><svg viewBox="0 0 16 16"><path d="M3 12.500h9.500V3" fill="none" stroke="#777" stroke-dasharray="2 1"/><path d="M6.500 4v5M4 6.500h5" stroke="#333"/></svg></button>
            <button class="glyph big" aria-label="Snap text baselines">A</button>
            <hr>
            <button aria-label="Snap page border"><svg viewBox="0 0 16 16"><rect x="4.500" y="2.500" width="8" height="11" fill="#eee" stroke="#333"/></svg></button>
            <button class="pressed" aria-label="Snap grids"><svg viewBox="0 0 16 16"><path d="M2 3.500h12M2 6.500h12M2 9.500h12M2 12.500h12M3.500 2v12M6.500 2v12M9.500 2v12M12.500 2v12" stroke="#33339a"/></svg></button>
            <button class="pressed" aria-label="Snap guides"><svg viewBox="0 0 16 16"><path d="M3.500 2v12M6 13l5-10M13.500 2v12" stroke="#4444a4"/></svg></button>
        </div>
    </main>

    <!-- Palette -->
    <div class="palette">
        <button class="none" aria-label="No color"><svg viewBox="0 0 12 12"><path d="M1 1l10 10M11 1L1 11" stroke="#311" stroke-width="1.300"/></svg></button>
        <div class="swatches" id="swatches"></div>
        <button class="palette-menu" aria-label="Palette menu"><svg viewBox="0 0 8 10"><path d="M.500 0v10" stroke="#111"/><path d="M6.500 2L4 5l2.500 3" fill="none" stroke="#111" stroke-width="1.500"/></svg></button>
    </div>
    <div class="palette-scroll"><span></span></div>

    <!-- Status bar -->
    <footer class="status">
        <div class="paint">
            <span>Fill:</span><span class="chip chip-fill"></span>
            <span>Stroke:</span><span class="chip-line"><span class="chip chip-stroke"></span>2</span>
        </div>
        <label for="obj-opacity">O:</label>
        <div class="spin"><input id="obj-opacity" value="0"><svg><use href="#i-down"/></svg></div>
        <span class="vsep"></span>
        <button aria-label="Layer visibility"><svg viewBox="0 0 16 16"><path d="M2 8q6-6 12 0-6 6-12 0z" fill="#aaa" stroke="#333"/><circle cx="8" cy="8" r="2.500" fill="#111"/><path d="M4 4l1 1M8 3v1M12 4l-1 1" stroke="#333"/></svg></button>
        <button aria-label="Layer lock"><svg><use href="#i-lock"/></svg></button>
        <select class="layer" aria-label="Layer"><option>•Layer 1</option></select>
        <p><b>Path</b> 8 nodes in layer <b>Layer 1</b>. Click selection to toggle scale/rotation handles.</p>
    </footer>

    <!-- Key display on top of the window -->
    <div class="keys">
        <svg class="mouse" viewBox="0 0 24 32"><defs><linearGradient id="mg" x2="0" y2="1"><stop stop-color="#fff"/><stop offset="1" stop-color="#c4c6c8"/></linearGradient></defs><path d="M3 1q9-1 9 4" fill="none" stroke="#333"/><rect x="2" y="4" width="20" height="26" rx="5" fill="url(#mg)" stroke="#222" stroke-width="1.500"/><path d="M3 14h18" stroke="#aaa"/><path d="M12 5v8" stroke="#222" stroke-width="1.500"/></svg>
        <kbd class="shift">Shift<svg viewBox="0 0 14 10"><path d="M7 1l5 4h-2v4H4V5H2z" fill="none" stroke="#d8d8d8"/></svg></kbd>
        <kbd>Ctrl</kbd>
        <kbd>Alt</kbd>
        <kbd></kbd>
    </div>

    <script src="script.js"></script>
</body>
</html>
```
FILE: styles.css
```css
* {
    box-sizing: border-box;
}

body {
    margin: 0;
    height: 100vh;
    padding: 10px 0 9px;
    display: flex;
    flex-direction: column;
    overflow: hidden;
    background: #000;
    color: #333;
    font-family: Roboto, "Noto Sans", sans-serif;
    font-size: 9px;
    line-height: 12px;
}

button, input, select {
    font: inherit;
    color: inherit;
    margin: 0;
    padding: 0;
    border: none;
    background: none;
    border-radius: 0;
}

button {
    display: flex;
    align-items: center;
    justify-content: center;
}

svg {
    display: block;
    width: 16px;
    height: 16px;
    flex: none;
}

h1, h2, h3, p, ul {
    margin: 0;
    padding: 0;
    font-size: inherit;
    list-style: none;
}

h3 {
    height: 17px;
    line-height: 17px;
    font-weight: 700;
}

.sprite {
    position: absolute;
    width: 0;
    height: 0;
}

/* Header */
.header {
    flex: none;
    background: linear-gradient(#484b4e, #3c3f3c);
    border-top: 1px solid #65686a;
    color: #e2e2e2;
}

.titlebar {
    height: 14px;
    display: grid;
    grid-template-columns: 60px 1fr 60px;
    align-items: center;
    padding-right: 6px;
}

.titlebar h1 {
    text-align: center;
    font-weight: 400;
    padding-right: 49px;
}

.win-menu {
    width: 6px;
    height: 6px;
    margin-left: 2px;
}

.win-buttons {
    display: flex;
    gap: 7px;
    justify-content: flex-end;
}

.win-buttons svg {
    width: 10px;
    height: 10px;
}

.menubar {
    display: flex;
    height: 16px;
}

.menubar > button,
.menu-holder > button {
    height: 16px;
    padding: 1px 5px 0;
}

.menubar > button:first-child {
    padding-left: 4px;
}

.menu-holder {
    position: relative;
}

.menu-holder > .open {
    background: #fcfcfc;
    color: #333;
    border-radius: 3px 3px 0 0;
}

.menu {
    position: absolute;
    top: 16px;
    left: 0;
    width: 153px;
    z-index: 10;
    background: #fefefe;
    border: 1px solid #aaa;
    border-top: none;
    color: #333;
    box-shadow: 2px 3px 6px rgba(0, 0, 0, 0.25);
}

.menu-list {
    height: 300px;
    display: grid;
    grid-auto-rows: 1fr;
}

.menu button {
    width: 100%;
    height: 100%;
    padding: 0 1px 0 16px;
    justify-content: space-between;
    position: relative;
}

.menu button svg {
    width: 6px;
    height: 6px;
}

.menu .current {
    background: #1cae80;
    color: #e8f6f0;
}

.menu-tail {
    margin: 2px 3px 0;
    border-top: 1px solid #ddd;
    padding: 5px 0 0;
}

.menu-tail li {
    height: 17px;
}

.menu .menu-tail li:last-child {
    height: 16px;
}

.menu .menu-tail button {
    padding-left: 13px;
}

.menu .funnel {
    position: absolute;
    left: -1px;
    width: 12px;
    height: 12px;
}

.pointer {
    position: absolute;
    left: 67px;
    top: 136px;
    width: 8px;
    height: 12px;
}

/* Tool controls */
.controls {
    flex: none;
    height: 28px;
    display: flex;
    align-items: center;
    background: linear-gradient(#fafafa, #f0f2f0);
    border-bottom: 1px solid #ccc;
    font-size: 8px;
}

.control-icons {
    display: flex;
    align-items: center;
    gap: 5px;
    width: 338px;
    padding-left: 5px;
}

.vsep {
    width: 1px;
    height: 14px;
    background: #ccc;
}

.control-icons .vsep {
    margin: 0 2px;
}

.control-fields {
    display: flex;
    align-items: center;
}

.control-fields label {
    width: 19px;
    text-align: center;
}

.control-fields .spin input {
    width: 45px;
}

.control-fields > .lock {
    width: 22px;
}

.lock svg {
    width: 10px;
    height: 10px;
}

.spin {
    position: relative;
    display: flex;
}

.spin input {
    width: 39px;
    height: 17px;
    padding-left: 3px;
    border: 1px solid #bbb;
    background: #fafafa;
}

.spin svg {
    position: absolute;
    right: 1px;
    top: 1px;
    width: 8px;
    height: 15px;
}

.control-fields .spin input {
    font-size: 8px;
}

select {
    appearance: none;
    height: 17px;
    padding: 0 14px 0 3px;
    border: 1px solid #aaa;
    background: #f2f2f0 url("data:image/svg+xml,%3Csvg xmlns='http://www.w3.org/2000/svg' viewBox='0 0 8 8'%3E%3Cpath d='M1.500 2.500L4 5l2.500-2.500' fill='none' stroke='%23222' stroke-width='1.500'/%3E%3C/svg%3E") no-repeat right 3px center / 8px 8px;
}

.unit {
    width: 30px;
    margin: 0 5px 0 2px;
}

.control-fields .unit {
    padding-right: 10px;
    background-position: right 2px center;
}

.toggles {
    display: flex;
    gap: 3px;
    margin-left: 4px;
}

.toggles button {
    width: 19px;
    height: 20px;
    background: #e6e8e6;
    border: 1px solid #c4c4c4;
}

.toggles svg {
    width: 12px;
    height: 12px;
}

/* Work area */
.main {
    flex: 1;
    min-height: 0;
    display: flex;
    background: #f2f4f2;
}

.toolbox {
    width: 28px;
    padding-top: 1px;
}

.tools {
    height: 80%;
    display: flex;
    flex-direction: column;
}

.tools button {
    flex: 1;
    min-height: 0;
    margin: 0 3px;
}

.tools .active,
.pressed {
    background: #e2e4e4;
    border: 1px solid #b8b8b8;
}

.editor {
    flex: 1;
    min-width: 0;
    display: grid;
    grid-template-columns: 16px 1fr 17px;
    grid-template-rows: 15px 1fr 14px;
}

.guide-lock {
    width: 10px;
    height: 10px;
    margin: 2px 0 0 3px;
}

.ruler-h {
    width: 100%;
    height: 15px;
    border-bottom: 1px solid #444;
}

.ruler-v {
    width: 16px;
    height: 100%;
    border-right: 1px solid #444;
}

.ruler-h text,
.ruler-v text {
    font-size: 7px;
    fill: #555;
}

.corner {
    width: 14px;
    height: 14px;
}

.canvas {
    width: 100%;
    height: 100%;
    background: #fff;
    overflow: hidden;
}

.headline {
    font-size: 37px;
    font-weight: 300;
    fill: #000;
}

.scroll-v {
    padding: 206px 0 0 4px;
}

.scroll-v span {
    display: block;
    width: 3px;
    height: 92px;
    background: #6c7072;
}

.scroll-h {
    padding: 6px 0 0 158px;
    background: linear-gradient(#ddd, #ddd) no-repeat 0 7px / 100% 2px;
}

.scroll-h span {
    display: block;
    width: 37%;
    height: 3px;
    background: #6c7072;
}

.cms {
    width: 10px;
    height: 10px;
    margin: 2px 0 0 1px;
}

/* Dock */
.dock {
    width: 243px;
    padding: 3px 4px 0 2px;
    border-left: 1px solid #ccc;
    display: flex;
    flex-direction: column;
}

.dock-title {
    height: 16px;
    flex: none;
    display: flex;
    align-items: center;
    padding-right: 4px;
}

.dock-title > svg {
    width: 11px;
    height: 11px;
}

.dock-title h2 {
    flex: 1;
    font-weight: 400;
    font-size: 9px;
    white-space: nowrap;
}

.dock-title button svg {
    width: 10px;
    height: 10px;
}

.dock-title button {
    margin-left: 7px;
}

.panel {
    border: 1px solid #c4c4c4;
    border-radius: 2px;
}

.rest {
    flex: 1;
    border-bottom: none;
}

.grip {
    height: 7px;
    line-height: 7px;
    text-align: center;
    color: #666;
}

.fill-panel {
    padding: 2px;
}

.tabs {
    display: flex;
    height: 19px;
    margin-bottom: -1px;
}

.tabs button {
    gap: 2px;
    padding: 2px 6px 0 5px;
    border-right: 1px solid #ccc;
    position: relative;
}

.tabs .selected {
    padding: 2px 4px 0 3px;
    background: #fafafa;
    border: 1px solid #bbb;
    border-bottom: none;
}

.tabs svg {
    width: 9px;
    height: 9px;
}

.tab-page {
    background: #fafafa;
    border: 1px solid #bbb;
    padding: 6px 8px 5px 6px;
}

.paint-types {
    display: flex;
    gap: 2px;
    margin-bottom: 4px;
}

.paint-types button {
    width: 21px;
    height: 20px;
}

.paint-types .narrow {
    width: 17px;
    margin-right: -1px;
}

.paint-types .unknown {
    color: #111;
    font-size: 16px;
    font-weight: 900;
}

.modes {
    display: grid;
    grid-template-columns: repeat(5, 1fr);
    gap: 3px;
    margin-top: 1px;
}

.modes button {
    height: 17px;
    font-size: 8px;
    border: 1px solid #aaa;
    background: linear-gradient(#fafafa, #ececec);
}

.modes .pressed {
    background: linear-gradient(#dcdede, #f0f0f0);
}

.wheel {
    position: relative;
    width: 80px;
    height: 80px;
    margin: 3px auto 4px;
}

.wheel::before {
    content: "";
    position: absolute;
    inset: 0;
    border-radius: 50%;
    background: conic-gradient(from 90deg, red, magenta, blue, cyan, lime, yellow, red);
    mask: radial-gradient(circle, transparent 31px, #000 32px);
}

.wheel svg {
    position: relative;
    width: 80px;
    height: 80px;
}

.alpha-row,
.rgba-row {
    display: flex;
    align-items: center;
    margin-right: -1px;
}

.alpha-row label {
    width: 18px;
    padding-left: 5px;
}

.alpha {
    appearance: none;
    flex: 1;
    min-width: 0;
    height: 17px;
    background:
        linear-gradient(90deg, rgba(67, 31, 238, 0), #431fee 97%),
        conic-gradient(#999 25%, #666 0 50%, #999 0 75%, #666 0) 0 0 / 11px 11px;
}

.alpha::-webkit-slider-thumb {
    appearance: none;
    width: 1px;
    height: 17px;
}

.alpha-row .spin {
    margin: 0 6px;
}

.rgba-row {
    margin: 5px 0 0;
}

.rgba-row svg {
    width: 14px;
    height: 14px;
}

.rgba-row .pick {
    width: 11px;
    height: 11px;
    margin-left: 7px;
}

.rgba-row label {
    margin-left: auto;
    padding-right: 3px;
    font-size: 8px;
}

.rgba-row input {
    width: 44px;
    height: 17px;
    padding-left: 3px;
    border: 1px solid #bbb;
    font-size: 8px;
}

.bar {
    position: relative;
    display: flex;
    align-items: center;
    height: 18px;
    margin: 4px 11px 0 0;
    padding: 0 4px;
    background: #fafafa;
    border: 1px solid #bbb;
}

.bar label {
    flex: 1;
}

.bar input {
    width: 40px;
    text-align: right;
}

.bar svg {
    position: absolute;
    right: -10px;
    width: 8px;
    height: 16px;
}

.full {
    color: #dff5ec;
    background: #1cae80;
    border: 2px solid #fafafa;
    outline: 1px solid #ccc;
    outline-offset: -1px;
    margin-bottom: 1px;
    padding: 0 2px;
}

.align-panel {
    padding: 0 3px 3px;
}

.line {
    height: 18px;
    display: flex;
    align-items: center;
    justify-content: flex-end;
    gap: 3px;
}

#relative {
    width: 84px;
    height: 18px;
}

#group {
    appearance: none;
    width: 9px;
    height: 9px;
    margin: 0 3px;
    background: #fff;
    border: 1px solid #aaa;
}

.icon-grid {
    display: grid;
    grid-template-columns: repeat(6, 1fr);
    grid-auto-rows: 26px;
    width: 153px;
    margin: -2px 0 0 auto;
}

.dist > :nth-child(5n + 1) {
    grid-column-start: 2;
}

.glyph {
    color: #222;
    font-family: "Liberation Serif", serif;
    font-size: 14px;
    font-weight: 700;
    line-height: 12px;
}

.stack {
    flex-direction: column;
    line-height: 7px;
    font-size: 13px;
}

.stack span {
    display: block;
}

.under {
    text-decoration: underline;
    text-decoration-thickness: 1px;
}

.lined span:first-child {
    border-bottom: 1px solid #444;
    padding: 0 0 1px 9px;
}

.sides::before {
    content: "";
    height: 15px;
    border-left: 1px solid #444;
}

.spaced {
    margin-top: 2px;
}

.overlaps {
    height: 24px;
}

.overlaps button {
    width: 25px;
}

.dock-scroll {
    width: 10px;
    padding: 4px 0 0 2px;
}

.dock-scroll span {
    display: block;
    width: 3px;
    height: 61%;
    background: #6c7072;
}

/* Right-hand bars */
.side-bar {
    width: 25px;
    padding-top: 2px;
    display: flex;
    flex-direction: column;
    align-items: center;
    background: #eef0f1;
}

.side-bar button {
    width: 20px;
    flex: 0 0 calc(100% / 28);
}

.side-bar .more {
    flex-basis: 10px;
}

.side-bar .more svg {
    width: 10px;
    height: 10px;
}

.side-bar svg {
    width: 16px;
    height: 16px;
}

.side-bar hr {
    flex: none;
    width: 13px;
    height: 1px;
    margin: 3px 0 4px;
    border: none;
    background: #bbb;
}

.snap-bar {
    width: 27px;
}

.big {
    font-size: 16px;
}

/* Palette */
.palette {
    flex: none;
    display: flex;
    height: 12px;
    padding-top: 1px;
    background: #f2f4f2;
}

.none,
.none svg {
    width: 12px;
    height: 11px;
    background: #fff;
}

.swatches {
    flex: 1;
    display: flex;
}

.swatches button {
    flex: 1;
    height: 11px;
}

.palette-menu,
.palette-menu svg {
    width: 9px;
    height: 11px;
}

.palette-scroll {
    flex: none;
    height: 10px;
    padding-top: 4px;
    background: #f2f4f2 linear-gradient(#ddd, #ddd) no-repeat 4px 5px / 100% 2px;
}

.palette-scroll span {
    display: block;
    width: 27%;
    height: 3px;
    margin-left: 4px;
    background: #6c7072;
}

/* Status bar */
.status {
    flex: none;
    height: 20px;
    display: flex;
    align-items: center;
    background: #f2f4f2;
    font-size: 9px;
}

.paint {
    display: grid;
    grid-template-columns: 25px 55px;
    grid-auto-rows: 9px;
    align-items: center;
    padding-left: 2px;
    font-size: 7px;
    line-height: 9px;
}

.chip {
    display: block;
    height: 9px;
}

.chip-fill {
    background: #431fee;
}

.chip-line {
    display: flex;
    gap: 2px;
}

.chip-stroke {
    flex: 1;
    background: #d9534a;
}

.status > label {
    width: 12px;
    padding-left: 3px;
    font-size: 8px;
}

.status .spin input {
    width: 30px;
    font-size: 8px;
}

.status .vsep {
    margin: 0 0 0 3px;
}

.status > button {
    width: 17px;
}

.status > button svg {
    width: 11px;
    height: 11px;
}

.layer {
    width: 55px;
    margin-left: 1px;
    font-size: 8px;
}

.status p {
    margin-left: 2px;
    white-space: nowrap;
}

/* Key display */
.keys {
    position: absolute;
    right: 0;
    bottom: 10px;
    width: 188px;
    height: 32px;
    display: flex;
    align-items: center;
    gap: 3px;
    padding-left: 6px;
    overflow: hidden;
    background: #f6f6f6;
    box-shadow: -2px 0 4px rgba(0, 0, 0, 0.15);
}

.mouse {
    width: 24px;
    height: 31px;
}

.keys kbd {
    flex: 0 0 35px;
    height: 27px;
    padding-left: 5px;
    line-height: 23px;
    font-family: inherit;
    font-size: 9px;
    font-weight: 700;
    color: #d4d4d4;
    background: #fafafa;
    border: 1px solid #d8d8d8;
    border-width: 1px 2px 2px 1px;
}

.keys .shift {
    flex-basis: 45px;
    font-size: 6px;
    line-height: 10px;
    padding-top: 2px;
}

.keys .shift svg {
    width: 14px;
    height: 10px;
}
```
FILE: script.js
```js
const SVG_NS = 'http://www.w3.org/2000/svg';

function addTick(svg, d) {
    const path = document.createElementNS(SVG_NS, 'path');
    path.setAttribute('d', d);
    path.setAttribute('stroke', '#555');
    svg.appendChild(path);
}

function addLabel(svg, x, y, label) {
    const text = document.createElementNS(SVG_NS, 'text');
    text.setAttribute('x', x);
    text.setAttribute('y', y);
    text.textContent = label;
    svg.appendChild(text);
}

// Horizontal ruler, one tick per mm
const rulerH = document.getElementById('rulerH');
const originX = 293.3;
const mm = 3.535;
for (let v = -82; v * mm + originX < rulerH.clientWidth; v++) {
    const x = Math.round(originX + v * mm) + 0.5;
    const top = v % 10 === 0 ? 0 : v % 2 === 0 ? 8 : 11;
    addTick(rulerH, `M${x} ${top}V15`);
    // labels hidden under the open menu are skipped
    if (v % 10 === 0 && (x < 150 || x > 310)) addLabel(rulerH, x + 2, 7, v);
}

// Vertical ruler, one tick per 2.5 mm, digits stacked
const rulerV = document.getElementById('rulerV');
for (let i = -2; i * 8.84 + 20.3 < rulerV.clientHeight; i++) {
    const y = Math.round(20.3 + i * 8.84) + 0.5;
    const left = i % 10 === 0 ? 3 : i % 2 === 0 ? 9 : 12;
    addTick(rulerV, `M${left} ${y}H16`);
    if (i % 10 === 0) {
        String(275 - i * 2.5).split('').forEach((digit, n) => addLabel(rulerV, 2, y + 6 + n * 5, digit));
    }
}

// Palette swatches
const colors = [
    '000000 1a1a1a 333333 4d4d4d 666666 808080 999999 b3b3b3 cccccc e6e6e6 ececec f2f2f2 f9f9f9 ffffff',
    '800000 ff0000 808000 ffff00 008000 00ff00 008080 00ffff 000080 0000ff 800080 ff00ff',
    '2b0000 550000 800000 aa0000 d40000 ff0000 ff2a2a ff5555 ff8080 ffaaaa ffd5d5',
    '280b0b 501616 782121 a02c2c c83737 d35f5f de8787 e9afaf f4d7d7',
    '241c1c 483737 6c5353 916f6f ac9393 c8b7b7 e3dbdb',
    '2b1100 552200 803300 aa4400 d45500 ff6600 ff7f2a ff9955 ffb380 ffccaa ffe6d5',
    '28170b 502d16 784421 a05a2c c87137 d38d5f deaa87 e9c6af f4e3d7',
    '241f1c 483e37 6c5d53 917c6f ac9d93 c8beb7 e3dedb',
    '2b2200 554400 806600 aa8800 d4aa00 ffcc00 ffd42a ffdd55 ffe680 ffeeaa fff6d5',
    '28220b 504416 786721 a0892c c8ab37 d3bc5f decd87 e9ddaf f4eed7',
    '24221c 484537 6c6753 918a6f aca793 c8c4b7 e3e2db',
    '1c2b00 445500 5c8500 7cb800 98dc00 ccff00 d4ff2a ddff55 e5ff80 eeffaa f6ffd5'
].join(' ').split(' ');

const swatches = document.getElementById('swatches');
colors.forEach(color => {
    const button = document.createElement('button');
    button.setAttribute('aria-label', '#' + color);
    button.style.background = '#' + color;
    swatches.appendChild(button);
});
```
